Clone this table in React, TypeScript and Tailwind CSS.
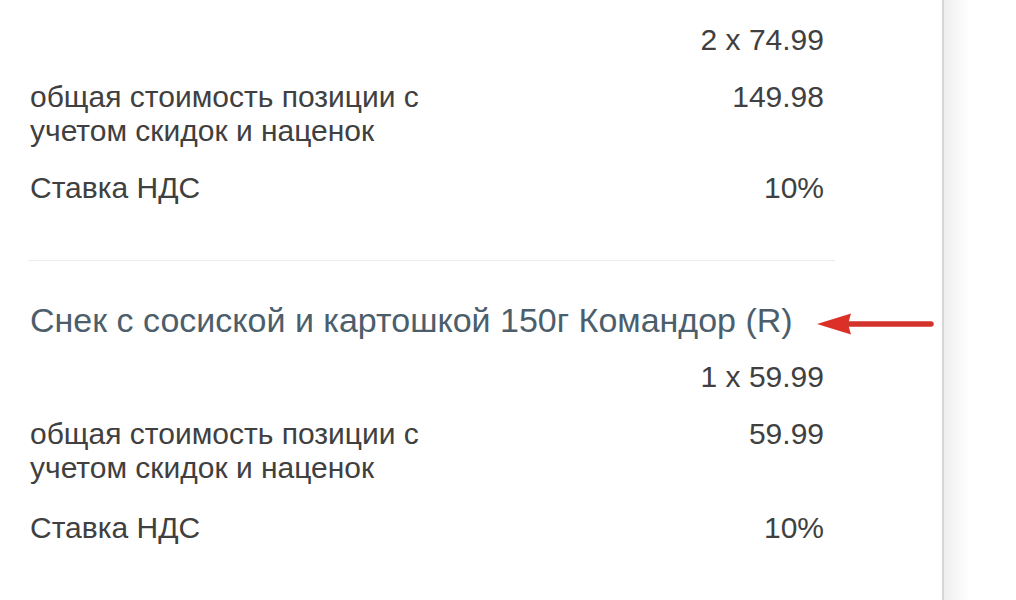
const items = [
  { name: null, qty: '2 x 74.99', total: '149.98', vat: '10%' },
  { name: 'Снек с сосиской и картошкой 150г Командор (R)', qty: '1 x 59.99', total: '59.99', vat: '10%' },
];

function Row({ label, value, className = '' }: { label?: React.ReactNode; value: string; className?: string }) {
  return (
    <div className={`flex justify-between items-start pr-[11px] ${className}`}>
      <div className="pl-[2px]">{label}</div>
      <div className="text-right whitespace-nowrap">{value}</div>
    </div>
  );
}

export default function App() {
  return (
    <div
      className="flex w-[1016px] h-[600px] overflow-hidden bg-white text-[#404040] text-[30px] leading-[34px]"
      style={{ fontFamily: '"Liberation Sans", Arial, sans-serif' }}
    >
      <div className="relative w-[944px] shrink-0 border-r-2 border-[#d6d6d6] pl-[28px] pt-[23px]">
        <div className="w-[807px]">
          {items.map((it, i) => (
            <div key={i}>
              {i > 0 && <div className="h-px bg-[#ececec] mt-[55px] mb-[42px]" />}
              <div className="flex flex-col gap-[23px]">
                {it.name && (
                  <div className="pl-[2px] text-[34px] text-[#4c5e6c]">{it.name}</div>
                )}
                <Row value={it.qty} />
                <Row
                  label={<>общая стоимость позиции с<br />учетом скидок и наценок</>}
                  value={it.total}
                />
                <Row label="Ставка НДС" value={it.vat} className={i > 0 ? 'mt-[3px]' : ''} />
              </div>
            </div>
          ))}
        </div>

        {/* red annotation arrow */}
        <svg className="absolute left-[814px] top-[312px]" width="122" height="24" viewBox="0 0 122 24">
          <path d="M3 12 L37 1.5 L34 12 L37 22.5 Z" fill="#dc2f26" />
          <line x1="33" y1="12" x2="117" y2="12" stroke="#d4332b" strokeWidth="5.5" strokeLinecap="round" />
        </svg>
      </div>
      <div className="w-[26px] shrink-0 bg-gradient-to-r from-[#eeeeee] to-white" />
      <div className="flex-1" />
    </div>
  );
}
